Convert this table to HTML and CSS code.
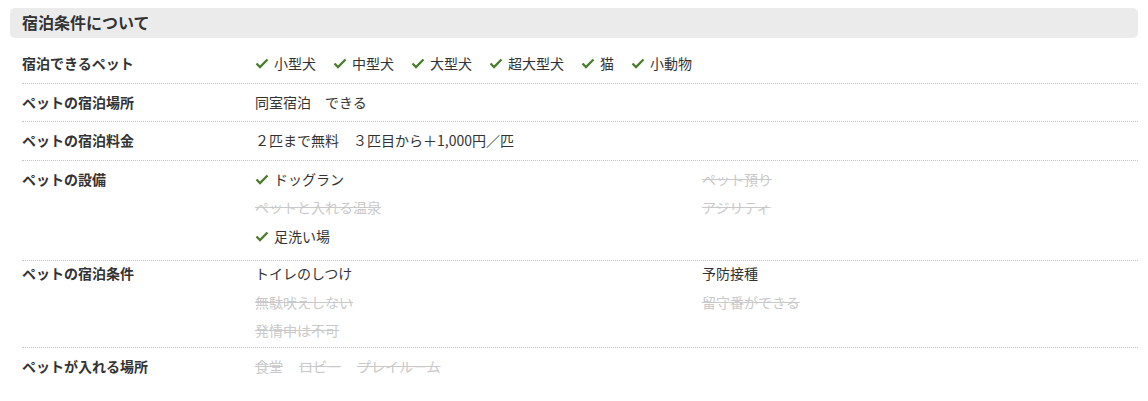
FILE: index.html
```html
<!DOCTYPE html>
<html lang="ja">
<head>
<meta charset="utf-8">
<link rel="stylesheet" href="styles.css">
</head>
<body>
<section class="conditions">
  <h2 class="heading">宿泊条件について</h2>
  <div class="table">
    <div class="row">
      <div class="label">宿泊できるペット</div>
      <div class="value chips">
        <span class="chip"><svg class="check" viewBox="0 0 14 11"><path d="M1.5 5.5 L5 9 L12.5 1.5"/></svg>小型犬</span>
        <span class="chip"><svg class="check" viewBox="0 0 14 11"><path d="M1.5 5.5 L5 9 L12.5 1.5"/></svg>中型犬</span>
        <span class="chip"><svg class="check" viewBox="0 0 14 11"><path d="M1.5 5.5 L5 9 L12.5 1.5"/></svg>大型犬</span>
        <span class="chip"><svg class="check" viewBox="0 0 14 11"><path d="M1.5 5.5 L5 9 L12.5 1.5"/></svg>超大型犬</span>
        <span class="chip"><svg class="check" viewBox="0 0 14 11"><path d="M1.5 5.5 L5 9 L12.5 1.5"/></svg>猫</span>
        <span class="chip"><svg class="check" viewBox="0 0 14 11"><path d="M1.5 5.5 L5 9 L12.5 1.5"/></svg>小動物</span>
      </div>
    </div>
    <div class="row">
      <div class="label">ペットの宿泊場所</div>
      <div class="value">同室宿泊　できる</div>
    </div>
    <div class="row">
      <div class="label">ペットの宿泊料金</div>
      <div class="value">２匹まで無料　３匹目から＋1,000円／匹</div>
    </div>
    <div class="row">
      <div class="label">ペットの設備</div>
      <div class="value grid2">
        <span class="item"><svg class="check" viewBox="0 0 14 11"><path d="M1.5 5.5 L5 9 L12.5 1.5"/></svg>ドッグラン</span>
        <span class="item off">ペット預り</span>
        <span class="item off">ペットと入れる温泉</span>
        <span class="item off">アジリティ</span>
        <span class="item"><svg class="check" viewBox="0 0 14 11"><path d="M1.5 5.5 L5 9 L12.5 1.5"/></svg>足洗い場</span>
      </div>
    </div>
    <div class="row tight">
      <div class="label">ペットの宿泊条件</div>
      <div class="value grid2">
        <span class="item">トイレのしつけ</span>
        <span class="item">予防接種</span>
        <span class="item off">無駄吠えしない</span>
        <span class="item off">留守番ができる</span>
        <span class="item off">発情中は不可</span>
      </div>
    </div>
    <div class="row last">
      <div class="label">ペットが入れる場所</div>
      <div class="value places">
        <span class="place off">食堂</span>
        <span class="place off">ロビー</span>
        <span class="place off">プレイルーム</span>
      </div>
    </div>
  </div>
</section>
</body>
</html>
```

FILE: styles.css
```css
html, body {
  margin: 0;
  padding: 0;
  background: #ffffff;
}
body {
  font-family: "Noto Sans CJK JP", "Noto Sans", sans-serif;
  color: #333333;
  font-size: 14px;
}
.conditions {
  padding: 8px 10px 0 10px;
}
.heading {
  margin: 0;
  height: 30px;
  line-height: 29px;
  padding: 0 12px;
  background: #ebebeb;
  border-radius: 5px;
  font-size: 16px;
  font-weight: bold;
  color: #333333;
}
.table {
  margin: 7px 0 0 12px;
}
.row {
  display: grid;
  grid-template-columns: 233px 1fr;
  padding: 9px 0;
  border-bottom: 1px dotted #c4c4c4;
  line-height: 19.5px;
}
.row.tight {
  padding: 3px 0 1px 0;
}
.row.last {
  border-bottom: none;
}
.label {
  font-weight: bold;
  color: #333333;
}
.value {
  color: #333333;
}
.chips {
  display: flex;
  gap: 17px;
}
.chip, .item {
  display: inline-flex;
  align-items: center;
}
.check {
  width: 14px;
  height: 11px;
  margin: 0 5px 0 0;
  fill: none;
  stroke: #4a7c2c;
  stroke-width: 2.3;
}
.grid2 {
  display: grid;
  grid-template-columns: 447px 1fr;
  row-gap: 9px;
  padding-bottom: 5px;
}
.places {
  display: flex;
  gap: 16px;
}
.off {
  color: #c9c9c9;
  text-decoration: line-through;
}
```
